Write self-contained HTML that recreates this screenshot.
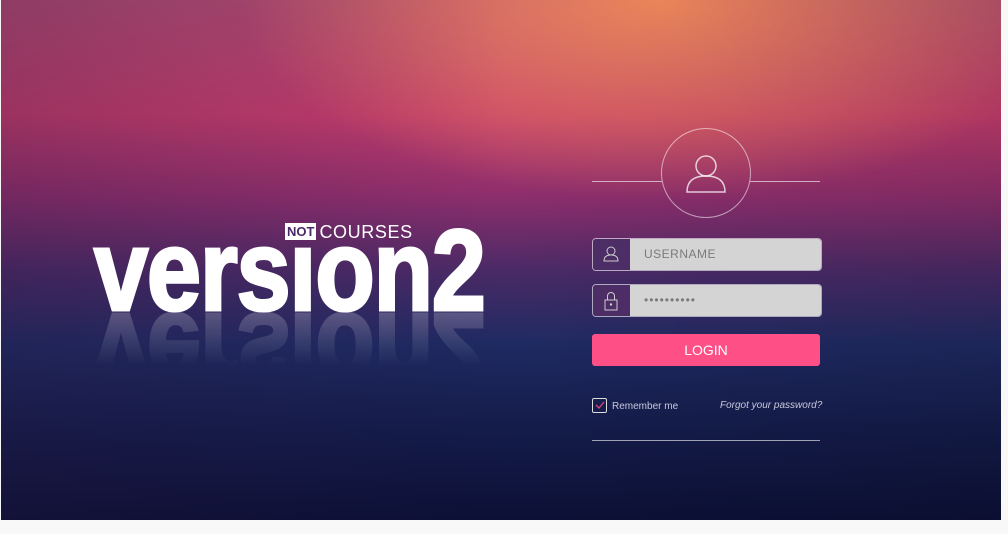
<!DOCTYPE html>
<html><head><style>
body{margin:0;width:1008px;height:534px;background:#f8f8f8;overflow:hidden;position:relative;font-family:"Liberation Sans",sans-serif}
#bg{position:absolute;left:1px;top:0;width:1000px;height:520px;overflow:hidden;
background:
radial-gradient(ellipse 420px 200px at 660px 0px,rgba(245,140,90,0.95),rgba(245,140,90,0) 100%),
linear-gradient(180deg,#b04a72 0%,#c23c6c 22%,#8c2e6c 38%,#4a2a66 52%,#1f2a62 66%,#141c4a 82%,#0c1036 100%);}
#bg:after{content:"";position:absolute;inset:0;background:linear-gradient(90deg,rgba(40,20,60,0.25),rgba(0,0,0,0) 50%,rgba(0,0,0,0.1));}
.logo,.refl{position:absolute;left:94px;font-weight:bold;color:#fff;font-size:150px;line-height:150px;letter-spacing:-2px;transform-origin:0 0;white-space:nowrap;z-index:2;-webkit-text-stroke:4px #fff}
.logo{top:212px;transform:scale(0.65,0.77)}
.refl{top:412px;opacity:.28;transform:scale(0.65,-0.77);-webkit-mask-image:linear-gradient(0deg,#000,transparent 60%)}
.nc{position:absolute;left:285px;top:222px;color:#fff;font-size:18px;letter-spacing:.6px;z-index:3;white-space:nowrap}
.nc b{background:#fff;color:#4a2a66;font-size:13px;padding:1px 2px;margin-right:3px;vertical-align:2px;letter-spacing:0}
.line{position:absolute;height:1px;background:rgba(255,255,255,.6);z-index:2}
.circ{position:absolute;left:661px;top:128px;width:88px;height:88px;border:1.5px solid rgba(255,255,255,.55);border-radius:50%;z-index:2}
.inp{position:absolute;left:592px;width:228px;height:31px;border:1px solid rgba(255,255,255,.6);border-radius:4px;overflow:hidden;z-index:2}
.inp .ic{position:absolute;left:0;top:0;width:37px;height:31px;background:#4c2d66}
.inp .f{position:absolute;left:37px;top:0;right:0;bottom:0;background:#d4d4d4;color:#7a7a7a;font-size:12px;line-height:31px;padding-left:14px;letter-spacing:.5px}
.btn{position:absolute;left:592px;top:334px;width:228px;height:32px;background:#fe4f87;border-radius:3px;color:#fff;text-align:center;line-height:33px;font-size:14px;z-index:2}
.small{position:absolute;font-size:10px;color:#c8c8dc;z-index:2}
</style></head><body>
<div id="bg"></div>
<div class="logo">version2</div>
<div class="refl">version2</div>
<div class="nc"><b>NOT</b>COURSES</div>
<div class="line" style="left:592px;top:181px;width:70px"></div>
<div class="line" style="left:750px;top:181px;width:70px"></div>
<div class="circ"><svg width="88" height="88" viewBox="0 0 88 88" style="position:absolute;left:0;top:0"><circle cx="44" cy="37" r="10" fill="none" stroke="#fff" stroke-opacity=".75" stroke-width="1.5"/><path d="M25 63 Q25 47 44 47 Q63 47 63 63 Z" fill="none" stroke="#fff" stroke-opacity=".75" stroke-width="1.5"/></svg></div>
<div class="inp" style="top:238px"><div class="ic"><svg width="37" height="31"><circle cx="18" cy="12" r="4" fill="none" stroke="#ccc" stroke-width="1"/><path d="M11 22 Q11 16 18 16 Q25 16 25 22 Z" fill="none" stroke="#ccc"/></svg></div><div class="f">USERNAME</div></div>
<div class="inp" style="top:284px"><div class="ic"><svg width="37" height="31"><path d="M14.5 15 V11 a3.5 3.5 0 0 1 7 0 V15" fill="none" stroke="#ccc"/><rect x="12" y="15" width="12" height="10" fill="none" stroke="#ccc"/><circle cx="18" cy="19.5" r="1.2" fill="#ccc"/></svg></div><div class="f" style="letter-spacing:1px">••••••••••</div></div>
<div class="btn">LOGIN</div>
<div style="position:absolute;left:592px;top:398px;width:13px;height:13px;border:1.5px solid #ddd;border-radius:2px;z-index:2"><svg width="13" height="13"><path d="M3 6 L6 9 L11 3" fill="none" stroke="#e0407a" stroke-width="1.3"/></svg></div>
<div class="small" style="left:612px;top:401px">Remember me</div>
<div class="small" style="left:720px;top:400px;font-style:italic">Forgot your password?</div>
<div class="line" style="left:592px;top:440px;width:228px"></div>
</body></html>
